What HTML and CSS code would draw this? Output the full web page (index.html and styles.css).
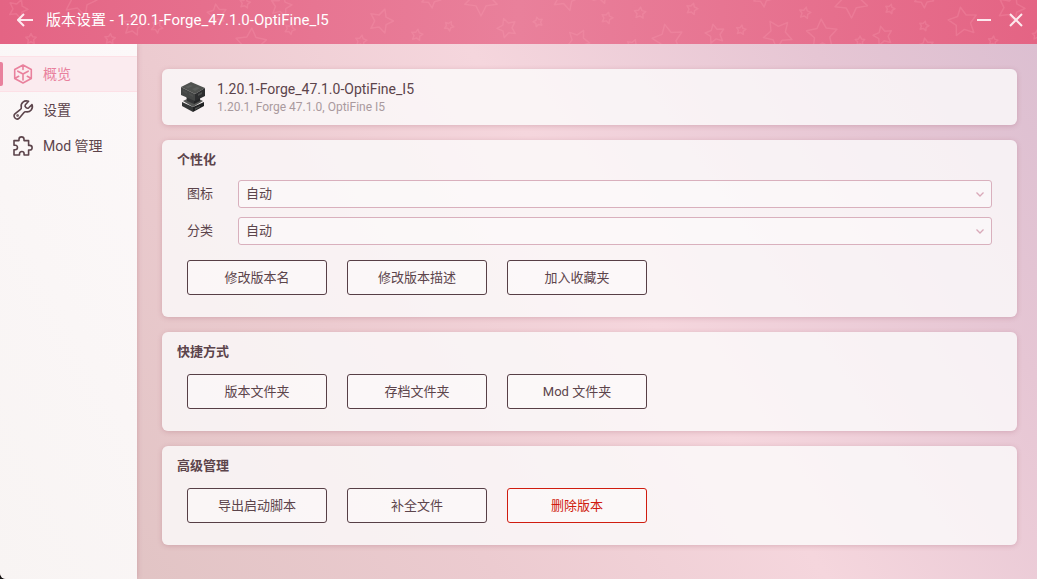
FILE: index.html
```html
<!DOCTYPE html>
<html lang="zh-CN">
<head>
<meta charset="utf-8">
<meta name="viewport" content="width=device-width, initial-scale=1">
<title>版本设置</title>
<link rel="stylesheet" href="styles.css">
</head>
<body>
<div class="window">
  <header class="titlebar">
    <svg class="stars" width="1037" height="44" aria-hidden="true">
      <defs>
        <path id="star" d="M0-10 2.9-4.2 9.5-3.1 4.8 1.5 5.9 8.1 0 5-5.9 8.1-4.8 1.5-9.5-3.1-2.9-4.2Z" vector-effect="non-scaling-stroke"/>
      </defs>
      <use href="#star" transform="translate(18 9) rotate(20)"/>
      <use href="#star" transform="translate(80 0) rotate(18) scale(1.7)"/>
      <use href="#star" transform="translate(31 39) scale(.55)"/>
      <use href="#star" transform="translate(110 39) rotate(5) scale(.55)"/>
      <use href="#star" transform="translate(133 26) rotate(10)"/>
      <use href="#star" transform="translate(157 27) rotate(30) scale(.6)"/>
      <use href="#star" transform="translate(217 14) rotate(-8)"/>
      <use href="#star" transform="translate(245 3) rotate(10) scale(.55)"/>
      <use href="#star" transform="translate(281 6) rotate(12) scale(1.1)"/>
      <use href="#star" transform="translate(290 29) rotate(25) scale(.55)"/>
      <use href="#star" transform="translate(251 44) rotate(3) scale(1.6)"/>
      <use href="#star" transform="translate(381 21) rotate(18) scale(1.25)"/>
      <use href="#star" transform="translate(361 41) rotate(10) scale(.6)"/>
      <use href="#star" transform="translate(417 35) rotate(10) scale(.6)"/>
      <use href="#star" transform="translate(449 26) rotate(28) scale(.5)"/>
      <use href="#star" transform="translate(431 -2) rotate(30)"/>
      <use href="#star" transform="translate(481 -1) rotate(36) scale(1.7)"/>
      <use href="#star" transform="translate(507 28) rotate(-20)"/>
      <use href="#star" transform="translate(538 22) rotate(-15) scale(.5)"/>
      <use href="#star" transform="translate(566 -3) rotate(20) scale(1.4)"/>
      <use href="#star" transform="translate(578 41) rotate(28) scale(1.2)"/>
      <use href="#star" transform="translate(607 18) rotate(16) scale(.6)"/>
      <use href="#star" transform="translate(601 -6) rotate(15)"/>
      <use href="#star" transform="translate(633 46) rotate(20) scale(.7)"/>
      <use href="#star" transform="translate(640 13) rotate(5) scale(.6)"/>
      <use href="#star" transform="translate(668 40) rotate(-12) scale(1.6)"/>
      <use href="#star" transform="translate(692 9) rotate(15) scale(.6)"/>
      <use href="#star" transform="translate(715 34) rotate(-12)"/>
      <use href="#star" transform="translate(741 30) rotate(10) scale(.5)"/>
      <use href="#star" transform="translate(763 -3) rotate(30)"/>
      <use href="#star" transform="translate(778 34) rotate(-32) scale(1.5)"/>
      <use href="#star" transform="translate(805 13) rotate(12) scale(.6)"/>
      <use href="#star" transform="translate(822 35) rotate(-3) scale(1.6)"/>
      <use href="#star" transform="translate(851 1) rotate(34) scale(1.7)"/>
      <use href="#star" transform="translate(860 41) scale(.5)"/>
      <use href="#star" transform="translate(883 36) rotate(-14)"/>
      <use href="#star" transform="translate(890 9) rotate(15) scale(.5)"/>
      <use href="#star" transform="translate(924 -2) rotate(34)"/>
      <use href="#star" transform="translate(924 26) rotate(15) scale(.5)"/>
      <use href="#star" transform="translate(926 46) rotate(-10) scale(.8)"/>
      <use href="#star" transform="translate(963 22) rotate(-10) scale(1.5)"/>
      <use href="#star" transform="translate(993 41) rotate(8) scale(.5)"/>
      <use href="#star" transform="translate(1011 8) rotate(20) scale(1.4)"/>
      <use href="#star" transform="translate(1037 35) scale(.5)"/>
    </svg>
    <button class="icon-button back" type="button" aria-label="返回">
      <svg width="16" height="14" viewBox="0 0 16 14"><path d="M7 1 1 7l6 6M1 7h15"/></svg>
    </button>
    <h1 class="window-title">版本设置 - 1.20.1-Forge_47.1.0-OptiFine_I5</h1>
    <div class="window-controls">
      <button class="icon-button" type="button" aria-label="最小化">
        <svg width="14" height="14" viewBox="0 0 14 14"><path d="M0 7h14"/></svg>
      </button>
      <button class="icon-button" type="button" aria-label="关闭">
        <svg width="14" height="14" viewBox="0 0 14 14"><path d="m1 1 12 12M13 1 1 13"/></svg>
      </button>
    </div>
  </header>

  <div class="body">
    <nav class="sidebar">
      <a class="nav-item active" href="#overview" aria-current="page">
        <svg class="nav-icon" viewBox="0 0 20 20"><path d="M10 1 18.300 5.500v9L10 19l-8.300-4.500v-9ZM4.800 7.200 10 10l5.200-2.800M10 10v6M10 1v4.500M1.700 14.500l4-2.200M18.300 14.500l-4-2.200"/></svg>
        <span>概览</span>
      </a>
      <a class="nav-item" href="#settings">
        <svg class="nav-icon" viewBox="0 0 20 20"><path d="M15.600 1.300C11.500-.3 7.200 2.800 8.300 7.300c.2 1-.1 1.500-.8 2.100L1.900 13.900c-2.700 2.600 1.500 7 4.300 4.300l4.600-5.500c.6-.7 1.100-1 2.100-.9 4.400.8 7.700-3.200 6.100-7.200l-3.300 3.200c-1.800 1.300-4.700-1.200-3.300-3.100Z"/><circle cx="4.600" cy="15.500" r=".5"/></svg>
        <span>设置</span>
      </a>
      <a class="nav-item" href="#mods">
        <svg class="nav-icon" viewBox="0 0 20 20"><path d="M1 4.600h5V3.300c0-3.200 5-3.200 5 0v1.300h4.600v4.800h1.200c3.100 0 3.100 4.600 0 4.600h-1.200v5h-4.500v-1.300c0-2.900-4.600-2.900-4.600 0V19H1v-5.200h1.300c2.900 0 2.900-4.500 0-4.500H1Z"/></svg>
        <span>Mod 管理</span>
      </a>
    </nav>

    <main class="content">
      <section class="card version">
        <svg class="anvil" viewBox="0 0 24 30" aria-hidden="true">
          <path fill="#555755" d="M2 19 12 14l10 5-10 6Z"/>
          <path fill="#343636" d="m1 20 11 5v5L1 24Z"/>
          <path fill="#202122" d="m23 20-11 5v5l11-6Z"/>
          <path fill="#333435" d="m5 12 8 4v6l-7-3Z"/>
          <path fill="#242526" d="m19 12-6 4v6l6-3Z"/>
          <path fill="#50524f" d="M0 5 10 0l14 6-10 6Z"/>
          <path fill="#444645" d="m0 5 14 7v7L0 13Z"/>
          <path fill="#2c2d2e" d="m24 6-10 6v7l10-5Z"/>
          <path fill="#5c5e5c" d="m4 5 5-2 3 1-5 2ZM11 7l5-2 3 1-5 3Z"/>
          <path fill="#4c4e4d" d="m2 8 4 2v2l-4-2ZM8 11l4 2v2l-4-2ZM17 12l4-2v2l-4 2ZM14 26l5-2v1l-5 3Z"/>
        </svg>
        <div>
          <h2 class="version-name">1.20.1-Forge_47.1.0-OptiFine_I5</h2>
          <p class="version-info">1.20.1, Forge 47.1.0, OptiFine I5</p>
        </div>
      </section>

      <section class="card">
        <h2 class="card-title">个性化</h2>
        <div class="fields">
          <label for="icon">图标</label>
          <div class="select-box">
            <select id="icon"><option>自动</option></select>
            <svg class="chevron" viewBox="0 0 8 5"><path d="m.5.5 3.500 3.500L7.500.5"/></svg>
          </div>
          <label for="category">分类</label>
          <div class="select-box">
            <select id="category"><option>自动</option></select>
            <svg class="chevron" viewBox="0 0 8 5"><path d="m.5.5 3.500 3.500L7.500.5"/></svg>
          </div>
        </div>
        <div class="actions">
          <button class="button" type="button">修改版本名</button>
          <button class="button" type="button">修改版本描述</button>
          <button class="button" type="button">加入收藏夹</button>
        </div>
      </section>

      <section class="card">
        <h2 class="card-title">快捷方式</h2>
        <div class="actions">
          <button class="button" type="button">版本文件夹</button>
          <button class="button" type="button">存档文件夹</button>
          <button class="button" type="button">Mod 文件夹</button>
        </div>
      </section>

      <section class="card">
        <h2 class="card-title">高级管理</h2>
        <div class="actions">
          <button class="button" type="button">导出启动脚本</button>
          <button class="button" type="button">补全文件</button>
          <button class="button danger" type="button">删除版本</button>
        </div>
      </section>
    </main>
  </div>
</div>
</body>
</html>
```
FILE: styles.css
```css
* { box-sizing: border-box; }

html { background: #151515; }

body {
  margin: 0;
  color: #5c444b;
  font: 13px/18px Roboto, "Noto Sans CJK SC", sans-serif;
}

h1, h2, p { margin: 0; font-weight: inherit; }

button, select { font: inherit; color: inherit; }

.window {
  display: flex;
  flex-direction: column;
  min-height: 100vh;
  overflow: hidden;
  border-bottom-left-radius: 6px;
  background: linear-gradient(56deg, #e0c3c3 6%, #eccbd0 35%, #f5d6dd 58%, #e6c6d4 82%, #dcbfd1 98%);
}

.titlebar {
  position: relative;
  display: flex;
  align-items: center;
  height: 44px;
  padding: 0 13px 4px 9px;
  overflow: hidden;
  color: #fff;
  background: linear-gradient(90deg, #e46484, #e9809b 50%, #e46484);
}

.stars {
  position: absolute;
  inset: 0;
  fill: none;
  stroke: rgba(255, 170, 185, .22);
  stroke-width: 1.5;
  stroke-linejoin: round;
}

.icon-button {
  position: relative;
  display: grid;
  place-items: center;
  width: 32px;
  height: 32px;
  padding: 0;
  border: 0;
  background: none;
  fill: none;
  stroke: #fdeaef;
  stroke-width: 2;
}

.window-title {
  position: relative;
  flex: 1;
  margin-left: 5px;
  font-size: 15px;
  line-height: 20px;
}

.window-controls { display: flex; margin-right: -8px; }

.body { display: flex; flex: 1; }

.sidebar {
  flex: 0 0 137px;
  padding-top: 12px;
  background: linear-gradient(62deg, #f8f4f3, #fcf8f9);
  box-shadow: 0 0 5px rgba(150, 70, 90, .3);
}

.nav-item {
  position: relative;
  display: flex;
  align-items: center;
  gap: 10px;
  height: 36px;
  padding-left: 13px;
  color: inherit;
  font-size: 14px;
  text-decoration: none;
}

.nav-item.active {
  color: #e9819d;
  background: #fbebef;
  border: solid #fde0e6;
  border-width: 1px 0;
}

.nav-item.active::before {
  content: "";
  position: absolute;
  left: 0;
  width: 3px;
  height: 24px;
  border-radius: 0 2px 2px 0;
  background: #e9819d;
}

.nav-icon {
  width: 20px;
  height: 20px;
  overflow: visible;
  fill: none;
  stroke: currentColor;
  stroke-width: 1.6;
  stroke-linejoin: round;
  stroke-linecap: round;
}

.content {
  display: flex;
  flex: 1;
  flex-direction: column;
  gap: 15px;
  padding: 25px 20px 25px 25px;
}

.card {
  padding: 11px 25px 22px;
  border-radius: 6px;
  background: rgba(251, 251, 251, .8);
  box-shadow: 0 1px 5px rgba(150, 70, 90, .25);
}

.version {
  display: flex;
  align-items: center;
  gap: 12px;
  padding: 10px 19px;
}

.anvil { width: 24px; height: 30px; }

.version-name { font-size: 14px; line-height: 20px; }

.version-info { font-size: 12px; line-height: 16px; color: #a99a9e; }

.card-title {
  margin: 0 0 11px -10px;
  font-size: 13px;
  font-weight: 700;
}

.fields {
  display: grid;
  grid-template-columns: 51px 1fr;
  row-gap: 9px;
  align-items: center;
  margin-bottom: 15px;
}

.select-box { position: relative; }

.select-box select {
  display: block;
  width: 100%;
  height: 28px;
  padding: 0 7px;
  appearance: none;
  border: 1px solid #d9b0bd;
  border-radius: 3px;
  background: rgba(255, 255, 255, .4);
}

.chevron {
  position: absolute;
  top: 12px;
  right: 8px;
  width: 8px;
  height: 5px;
  fill: none;
  stroke: #d9a9b9;
  stroke-width: 1.3;
  pointer-events: none;
}

.actions { display: flex; flex-wrap: wrap; gap: 20px; }

.card-title + .actions { margin-top: 13px; }

.button {
  width: 140px;
  height: 35px;
  padding: 0;
  border: 1px solid #573f46;
  border-radius: 3px;
  background: rgba(255, 255, 255, .4);
}

.button.danger { color: #d01c0f; border-color: #d01c0f; }
```
